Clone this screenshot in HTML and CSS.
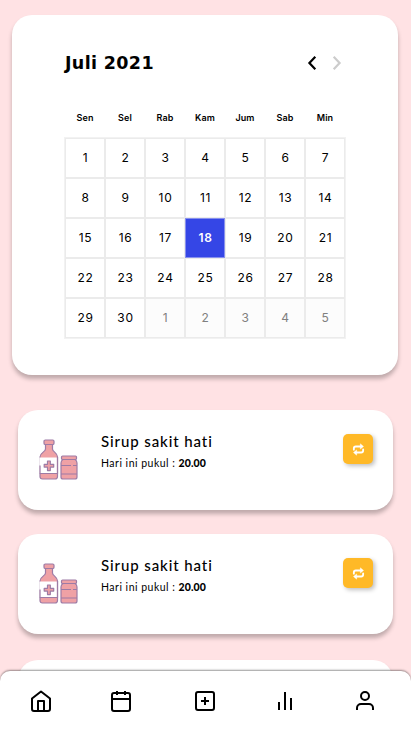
FILE: index.html
```html
<!DOCTYPE html>
<html lang="id">
<head>
<meta charset="utf-8">
<meta name="viewport" content="width=device-width, initial-scale=1">
<title>Juli 2021</title>
<link rel="stylesheet" href="styles.css">
</head>
<body>
<svg class="defs" aria-hidden="true">
  <symbol id="bottles" viewBox="0 0 40 42">
    <g fill="#efa1a5" stroke="#9d7ba5" stroke-width="1.2" stroke-linejoin="round">
      <path d="M6.500 5.500h7v4.500c0 3 5 3.500 5 8v19.500q0 2.500-2.500 2.500H3.500Q1 40 1 37.500V18c0-4.500 5.500-5 5.500-8z"/>
      <rect x="5" y="1" width="10" height="4.500" rx="1.300"/>
      <path d="M24 20.500h12q2 1.200 2 3.500v14q0 2-2 2H24q-2 0-2-2V24q0-2.300 2-3.500z"/>
      <rect x="22.500" y="17" width="15" height="3.500" rx="1"/>
      <path d="M1 34.500h17.500M22 35h16M22 26.500h10M34 26.500h4" fill="none"/>
      <path d="M.3 18.500h17.600v16H.3z" fill="#fff" stroke="none"/>
      <path d="M18.500 18v17M1 26.500v8h17.500" fill="none"/>
      <path d="M8.500 22h2.800v3.300h3.400v2.800h-3.400v3.500H8.500v-3.500H5.200v-2.800h3.300z"/>
    </g>
  </symbol>
  <symbol id="repeat" viewBox="0 0 14 14">
    <g fill="none" stroke="#fff" stroke-width="2" stroke-linecap="round">
      <path d="M2 7.200V5.900Q2 3.800 4.100 3.800H9.500"/>
      <path d="M12 6.800v1.300q0 2.100-2.100 2.100H4.500"/>
    </g>
    <path d="M9 .9v5.600l3.400-2.800zM5 13.100V7.500l-3.400 2.800z" fill="#fff" stroke="#fff" stroke-width=".5" stroke-linejoin="round"/>
  </symbol>
</svg>
<main class="page">
  <section class="calendar">
    <header class="calendar-head">
      <h1>Juli 2021</h1>
      <div class="arrows">
        <svg width="8" height="14" viewBox="0 0 8 14"><path d="M7.300.7 1.400 7l5.900 6.300"/></svg>
        <svg class="muted" width="8" height="14" viewBox="0 0 8 14"><path d="M.7.7 6.600 7 .7 13.300"/></svg>
      </div>
    </header>
    <div class="weekdays"><span>Sen</span><span>Sel</span><span>Rab</span><span>Kam</span><span>Jum</span><span>Sab</span><span>Min</span></div>
    <div class="days">
      <span>1</span><span>2</span><span>3</span><span>4</span><span>5</span><span>6</span><span>7</span>
      <span>8</span><span>9</span><span>10</span><span>11</span><span>12</span><span>13</span><span>14</span>
      <span>15</span><span>16</span><span>17</span><span class="selected">18</span><span>19</span><span>20</span><span>21</span>
      <span>22</span><span>23</span><span>24</span><span>25</span><span>26</span><span>27</span><span>28</span>
      <span>29</span><span>30</span><span class="next">1</span><span class="next">2</span><span class="next">3</span><span class="next">4</span><span class="next">5</span>
    </div>
  </section>
  <article class="item">
    <svg class="medicine"><use href="#bottles"/></svg>
    <div class="info"><h2>Sirup sakit hati</h2><p>Hari ini pukul : <b>20.00</b></p></div>
    <button class="again" aria-label="Ulangi"><svg width="13" height="13"><use href="#repeat"/></svg></button>
  </article>
  <article class="item">
    <svg class="medicine"><use href="#bottles"/></svg>
    <div class="info"><h2>Sirup sakit hati</h2><p>Hari ini pukul : <b>20.00</b></p></div>
    <button class="again" aria-label="Ulangi"><svg width="13" height="13"><use href="#repeat"/></svg></button>
  </article>
  <article class="item last"></article>
</main>
<nav class="tabs">
  <svg viewBox="0 0 24 24"><path d="M3 9.500 12 2.500l9 7V20a2 2 0 0 1-2 2H5a2 2 0 0 1-2-2zM9 22V12h6v10"/></svg>
  <svg viewBox="0 0 24 24"><rect x="3" y="4" width="18" height="18" rx="2"/><path d="M16 2v4M8 2v4M3 10h18"/></svg>
  <svg viewBox="0 0 24 24"><rect x="3" y="3" width="18" height="18" rx="2"/><path d="M12 8v8M8 12h8"/></svg>
  <svg viewBox="0 0 24 24"><path d="M18 21V9M12 21V3M6 21v-8"/></svg>
  <svg viewBox="0 0 24 24"><path d="M20 21v-2a4 4 0 0 0-4-4H8a4 4 0 0 0-4 4v2"/><circle cx="12" cy="7" r="4"/></svg>
</nav>
</body>
</html>
```
FILE: styles.css
```css
* { box-sizing: border-box; }
body {
  margin: 0;
  height: 731px;
  overflow: hidden;
  background: #ffe2e4;
  color: #000;
  font-family: Inter, sans-serif;
}
h1, h2, p { margin: 0; }
.defs { display: none; }
.page { height: 731px; overflow: hidden; padding-top: 15px; }
.calendar {
  width: 386px;
  height: 360px;
  margin-left: 12px;
  padding: 34px 53px 0;
  border-radius: 20px;
  background: #fff;
  box-shadow: 0 4px 4px rgba(0, 0, 0, .25);
}
.calendar-head { display: flex; justify-content: space-between; align-items: center; height: 28px; }
.calendar-head h1 {
  font: 700 17.5px/28px "DejaVu Sans", sans-serif;
  letter-spacing: .35px;
  white-space: nowrap;
}
.arrows { display: flex; gap: 17px; padding-right: 4px; }
.arrows svg { fill: none; stroke: #000; stroke-width: 2.2; overflow: visible; }
.arrows .muted { stroke: #ccc; }
.weekdays {
  display: grid;
  grid-template-columns: repeat(7, 40px);
  margin-top: 34px;
  font-size: 9px;
  font-weight: 600;
  line-height: 14px;
  letter-spacing: .1px;
  text-align: center;
}
.days {
  display: grid;
  grid-template-columns: repeat(7, 40px);
  grid-auto-rows: 40px;
  width: 280px;
  margin-top: 13px;
  box-shadow: 0 0 0 1px #f2f2f2;
}
.days span {
  border: 1px solid #ebebeb;
  padding-left: 1px;
  font-size: 12px;
  line-height: 38px;
  letter-spacing: .7px;
  text-align: center;
}
.days .selected { background: #3546e6; border-color: #8790ee; color: #fff; font-weight: 600; }
.days .next { background: #fcfcfc; color: #808080; }
.item {
  display: flex;
  width: 375px;
  height: 100px;
  margin: 24px 0 0 18px;
  padding: 24px 20px 0;
  border-radius: 20px;
  background: #fff;
  box-shadow: 0 4px 4px rgba(0, 0, 0, .25);
}
.calendar + .item { margin-top: 35px; }
.item.last { margin-top: 26px; }
.medicine { width: 40px; height: 42px; margin: 5px -1px 0 1px; }
.info { flex: 1; padding-left: 23px; white-space: nowrap; }
.info h2 { font: 500 15px/14px Lato, sans-serif; letter-spacing: .9px; }
.info p { margin-top: 8px; font: 400 10.500px/14px Lato, sans-serif; letter-spacing: .5px; }
.info b { font-weight: 900; letter-spacing: .1px; }
.again {
  display: flex;
  align-items: center;
  justify-content: center;
  width: 30px;
  height: 30px;
  padding: 0;
  border: 0;
  border-radius: 5px;
  background: #ffb927;
  box-shadow: 2px 2px 4px rgba(0, 0, 0, .25);
}
.tabs {
  position: fixed;
  inset: auto 0 0;
  display: grid;
  grid-template-columns: 80px 84px 80px 80px 24px;
  height: 60px;
  padding: 18px 0 0 29px;
  border-radius: 10px 10px 0 0;
  background: #fff;
  box-shadow: 0 -1px 2px rgba(0, 0, 0, .4);
}
.tabs svg {
  width: 24px;
  height: 24px;
  fill: none;
  stroke: #000;
  stroke-width: 2;
  stroke-linejoin: round;
}
```
